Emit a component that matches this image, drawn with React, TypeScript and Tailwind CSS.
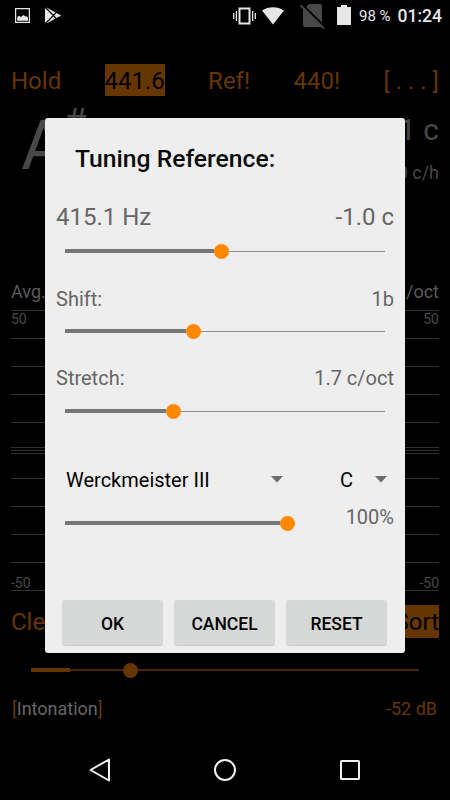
import type { ReactNode } from 'react';

interface SliderProps {
  value: number;
  className?: string;
}

function Slider({ value, className = '' }: SliderProps) {
  return (
    <div className={`flex h-5 items-center ${className}`}>
      <div className="h-1 bg-[#767676]" style={{ width: value - 7.5 }} />
      <div className="size-[15px] shrink-0 rounded-full bg-[#ff8800]" />
      <div className="h-px flex-1 bg-[#8f8f8f]" />
    </div>
  );
}

function DialogButton({ children }: { children: ReactNode }) {
  return (
    <button className="h-[46px] flex-1 rounded-[3px] border-b border-[#c9cac9] bg-[#d6d8d7] pt-[3px] text-[17.5px] font-medium text-black">
      {children}
    </button>
  );
}

function Caret() {
  return (
    <svg width="12" height="7" viewBox="0 0 12 7" className="-mt-0.5 shrink-0">
      <path d="M0 0h12L6 6.5z" fill="#6c6c6c" />
    </svg>
  );
}

function StatusBar() {
  return (
    <div className="flex h-8 items-center pl-[15px] pr-2 text-[#e6e6e6]">
      <svg width="15" height="15" viewBox="0 0 15 15" className="-mt-px">
        <path d="M.6.6h13.8v13.8H.6z" fill="none" stroke="currentColor" strokeWidth="1.2" />
        <path d="M2.2 12.7V9l2-1.2L6 9l2.5-2 2 1.4 1.2-.2 1.3 1.5v3z" fill="currentColor" />
      </svg>
      <svg width="17" height="18" viewBox="0 0 17 18" className="ml-[15px]">
        <path d="M0 1v15l7.6-7.5zM1.2.2l7.2 7.3 2.2-2.1zM1.2 16.8l7.2-7.3 2.2 2.1zM9.2 8.5l2.3-2.4L16.2 8.5l-4.7 2.4z" fill="currentColor" />
      </svg>
      <div className="ml-auto flex items-center">
        <svg width="23" height="18" viewBox="0 0 23 18" className="-mt-px">
          <path d="M6.5 1.5h10v15h-10z" fill="none" stroke="currentColor" strokeWidth="2" />
          <path d="M3.4 4v10M.7 6v6M19.6 4v10M22.3 6v6" stroke="currentColor" strokeWidth="1.3" />
        </svg>
        <svg width="22" height="18" viewBox="0 0 22 18" className="ml-[6px]">
          <path d="M0 3.5C6-1 16-1 22 3.5L11 17.5z" fill="currentColor" />
        </svg>
        <svg width="25" height="26" viewBox="0 0 25 26" className="ml-4">
          <path d="M9 1h11q2 0 2 2v19q0 2-2 2H5q-2 0-2-2V7z" fill="#484848" />
          <path d="M2 1.2L25 24" stroke="#000000" strokeWidth="2" />
          <path d="M.6 2.5L24 25.5" stroke="#484848" strokeWidth="1.8" />
        </svg>
        <svg width="14" height="20" viewBox="0 0 14 20" className="ml-3 -mt-0.5">
          <path d="M4 0h6v2h4v18H0V2h4z" fill="currentColor" />
        </svg>
        <span className="ml-2 text-[15px] leading-8">98 %</span>
        <span className="ml-[7px] text-[17.5px] font-medium leading-8">01:24</span>
      </div>
    </div>
  );
}

const gridLines = [10.5, 38.5, 66.5, 94.5, 122.5, 147.5, 150.5, 153.5, 178.5, 206.5, 234.5, 262.5, 290.5];

function CentChart() {
  return (
    <svg width="428" height="300" viewBox="0 0 428 300" className="mx-[11px] block">
      {gridLines.map((y) => (
        <line key={y} x1="0" x2="428" y1={y} y2={y} stroke="#303030" />
      ))}
      <g fill="#484848" fontSize="14">
        <text x="0" y="23.5">50</text>
        <text x="428" y="23.5" textAnchor="end">50</text>
        <text x="0" y="287.5">-50</text>
        <text x="428" y="287.5" textAnchor="end">-50</text>
      </g>
    </svg>
  );
}

function TunerScreen() {
  return (
    <div className="flex h-full flex-col">
      <StatusBar />

      <div className="mt-8 flex h-8 items-center justify-between px-[11px] text-2xl text-[#663600]">
        <span className="pt-0.5">Hold</span>
        <span className="bg-[#663600] pt-[3px] leading-[29px] text-black">441.6</span>
        <span className="pt-0.5">Ref!</span>
        <span className="pt-0.5">440!</span>
        <span className="pt-0.5">[ . . . ]</span>
      </div>

      <div className="flex h-[179px] justify-between px-[11px] text-[#484848]">
        <div className="flex pl-[10px]">
          <span className="mt-[10px] text-[69px] leading-[80px]">A</span>
          <span className="-ml-0.5 mt-[5px] text-[37px] leading-[42px]">#</span>
        </div>
        <div className="pt-[16px] text-right">
          <div className="text-[30px] leading-[36px]">0.1 c</div>
          <div className="mt-[11px] text-lg leading-[28px]">0.0 c/h</div>
        </div>
      </div>

      <div className="flex h-[25px] items-center justify-between px-[11px] pt-[8px] text-lg text-[#5a5a5a]">
        <span>Avg.</span>
        <span>/oct</span>
      </div>

      <CentChart />

      <div className="mt-[5px] flex h-[33px] items-center justify-between px-[11px] text-2xl leading-[33px] text-[#663600]">
        <span className="pt-0.5">Clear</span>
        <span className="bg-[#663600] pt-0.5 leading-[31px] text-black">Sort</span>
      </div>

      <div className="mt-[22px] flex h-5 items-center px-[31px]">
        <div className="h-1 w-[39px] bg-[#663600]" />
        <div className="h-0.5 w-[53px] bg-[#472600]" />
        <div className="size-[15px] rounded-full bg-[#663600]" />
        <div className="h-0.5 flex-1 bg-[#472600]" />
      </div>

      <div className="mt-[15px] flex h-7 items-center justify-between pl-3 pr-[13px] text-lg text-[#663600]">
        <span>
          [<span className="text-[#666666]">Intonation</span>]
        </span>
        <span>-52 dB</span>
      </div>

      <div className="mt-[17px] flex h-[60px] items-center text-[#f0f0f0]">
        <svg width="450" height="26" viewBox="0 0 450 26" fill="none" stroke="currentColor" strokeWidth="2">
          <path d="M109 2.5v21L90.5 13z" strokeLinejoin="round" />
          <circle cx="225" cy="13" r="10" />
          <rect x="341" y="4" width="18" height="18" rx="0.5" />
        </svg>
      </div>
    </div>
  );
}

function TuningDialog() {
  return (
    <div className="absolute left-[45px] top-[118px] flex h-[535px] w-[360px] flex-col rounded-[3px] bg-[#eeeeee] text-[#666666]">
      <h2 className="pl-[30px] text-[24.7px] font-medium leading-[82px] text-[#0a0a0a]">Tuning Reference:</h2>

      <div className="flex justify-between px-[11px] text-2xl leading-[34px]">
        <span>415.1 Hz</span>
        <span>-1.0 c</span>
      </div>
      <Slider value={156.5} className="mx-5 mt-[7px]" />

      <div className="mt-[22px] flex justify-between px-[11px] text-xl leading-8">
        <span>Shift:</span>
        <span>1b</span>
      </div>
      <Slider value={128} className="mx-5 mt-1.5" />

      <div className="mt-[21px] flex justify-between px-[11px] text-xl leading-8">
        <span>Stretch:</span>
        <span>1.7 c/oct</span>
      </div>
      <Slider value={108.5} className="mx-5 mt-[7px]" />

      <div className="mt-[43px] flex h-8 items-center pl-[21px] pr-[18px] text-xl text-black">
        <span className="w-[205px]">Werckmeister III</span>
        <Caret />
        <span className="ml-auto mr-[22px]">C</span>
        <Caret />
      </div>

      <div className="mt-[11px] flex h-[26px] items-start justify-between pl-5 pr-[11px]">
        <Slider value={222.5} className="mt-1.5 w-[230px]" />
        <span className="text-xl leading-5">100%</span>
      </div>

      <div className="mt-[67px] flex gap-[11px] pl-[17px] pr-[18px]">
        <DialogButton>OK</DialogButton>
        <DialogButton>CANCEL</DialogButton>
        <DialogButton>RESET</DialogButton>
      </div>
    </div>
  );
}

export default function App() {
  return (
    <div className="relative h-[800px] w-[450px] overflow-hidden bg-black font-[Roboto,sans-serif]">
      <TunerScreen />
      <TuningDialog />
    </div>
  );
}
